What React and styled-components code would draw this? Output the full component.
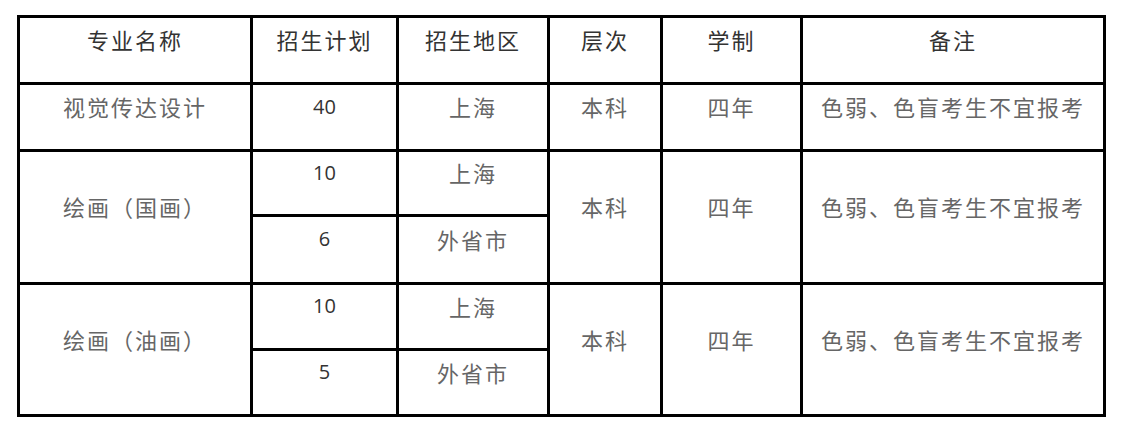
import React from 'react'
import styled, { createGlobalStyle } from 'styled-components'

const GlobalStyle = createGlobalStyle`
  html, body {
    margin: 0;
    background: #fff;
  }
`

const Page = styled.div`
  width: 1125px;
  height: 427px;
  padding: 15px 0 0 17px;
  box-sizing: border-box;
`

const Grid = styled.div`
  display: grid;
  grid-template-columns: 230px 143px 148px 110px 137px 300px;
  grid-template-rows: 64px 64px 62px 65px 63px 63px;
  gap: 3px;
  padding: 3px;
  width: 1089px;
  box-sizing: border-box;
  background: #000;
`

const Cell = styled.div`
  background: #fff;
  display: flex;
  align-items: center;
  justify-content: center;
  padding-bottom: ${p => (p.$head ? 23 : 22)}px;
  box-sizing: border-box;
  grid-row: ${p => p.$row || 'auto'};
  grid-column: ${p => p.$col || 'auto'};
  font-family: ${p => (p.$num ? '"Open Sans", "Noto Sans CJK SC", sans-serif' : '"Noto Sans CJK SC", "Noto Sans", sans-serif')};
  font-size: ${p => (p.$num ? 20 : 22)}px;
  letter-spacing: ${p => (p.$num ? 0 : 2)}px;
  color: ${p => (p.$head || p.$num ? '#333' : '#666')};
  white-space: nowrap;
`

const headers = ['专业名称', '招生计划', '招生地区', '层次', '学制', '备注']
const note = '色弱、色盲考生不宜报考'

export default function App() {
  return (
    <Page>
      <GlobalStyle />
      <Grid>
        {headers.map(h => (
          <Cell key={h} $head>{h}</Cell>
        ))}

        <Cell>视觉传达设计</Cell>
        <Cell $num>40</Cell>
        <Cell>上海</Cell>
        <Cell>本科</Cell>
        <Cell>四年</Cell>
        <Cell>{note}</Cell>

        <Cell $row="3 / span 2" $col="1">绘画（国画）</Cell>
        <Cell $row="3" $col="2" $num>10</Cell>
        <Cell $row="3" $col="3">上海</Cell>
        <Cell $row="3 / span 2" $col="4">本科</Cell>
        <Cell $row="3 / span 2" $col="5">四年</Cell>
        <Cell $row="3 / span 2" $col="6">{note}</Cell>
        <Cell $row="4" $col="2" $num>6</Cell>
        <Cell $row="4" $col="3">外省市</Cell>

        <Cell $row="5 / span 2" $col="1">绘画（油画）</Cell>
        <Cell $row="5" $col="2" $num>10</Cell>
        <Cell $row="5" $col="3">上海</Cell>
        <Cell $row="5 / span 2" $col="4">本科</Cell>
        <Cell $row="5 / span 2" $col="5">四年</Cell>
        <Cell $row="5 / span 2" $col="6">{note}</Cell>
        <Cell $row="6" $col="2" $num>5</Cell>
        <Cell $row="6" $col="3">外省市</Cell>
      </Grid>
    </Page>
  )
}
